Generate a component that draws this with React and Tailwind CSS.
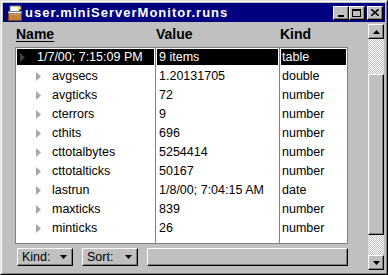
import React from "react";

const rows = [
  { name: "avgsecs", value: "1.20131705", kind: "double" },
  { name: "avgticks", value: "72", kind: "number" },
  { name: "cterrors", value: "9", kind: "number" },
  { name: "cthits", value: "696", kind: "number" },
  { name: "cttotalbytes", value: "5254414", kind: "number" },
  { name: "cttotalticks", value: "50167", kind: "number" },
  { name: "lastrun", value: "1/8/00; 7:04:15 AM", kind: "date" },
  { name: "maxticks", value: "839", kind: "number" },
  { name: "minticks", value: "26", kind: "number" },
];

const raised =
  "border border-t-white border-l-white border-r-black border-b-black shadow-[inset_-1px_-1px_#808080]";

const checker =
  "bg-[repeating-conic-gradient(#ffffff_0_25%,#c0c0c0_0_50%)] bg-[length:2px_2px]";

const Tri = ({ color }) => (
  <svg width="5" height="9" viewBox="0 0 5 9" className="shrink-0">
    <polygon points="0,0 5,4.5 0,9" fill={color} />
  </svg>
);

const DownArrow = () => (
  <svg width="7" height="4" viewBox="0 0 7 4">
    <polygon points="0,0 7,0 3.5,4" fill="black" />
  </svg>
);

const UpArrow = () => (
  <svg width="7" height="4" viewBox="0 0 7 4">
    <polygon points="0,4 7,4 3.5,0" fill="black" />
  </svg>
);

const TitleIcon = () => (
  <svg width="15" height="16" viewBox="0 0 15 16">
    <rect x="2" y="1" width="9" height="7" fill="#ffffff" stroke="#808080" />
    <path d="M11 0 L12 2 L14 1 L12.5 3 L14 5 L12 4 L11 6 L10.5 4 L9 4 L10.5 3 Z" fill="#ffff00" />
    <rect x="0.5" y="6.5" width="13" height="9" fill="#c08040" stroke="#804000" />
    <rect x="2" y="8" width="10" height="2" fill="#e0a060" />
    <rect x="0.5" y="6.5" width="13" height="2" fill="#ffffff" stroke="#808080" />
  </svg>
);

const TitleButton = ({ children }) => (
  <div className={`w-[16px] h-[14px] bg-[#c0c0c0] flex items-center justify-center ${raised}`}>
    {children}
  </div>
);

const App = () => {
  return (
    <div className="w-[388px] h-[275px] bg-[#c0c0c0] border border-t-[#dfdfdf] border-l-[#dfdfdf] border-r-black border-b-black font-['Liberation_Sans',Arial,sans-serif] text-black">
      <div className="h-full border border-t-white border-l-white border-r-[#808080] border-b-[#808080] p-px flex flex-col">
        {/* title bar */}
        <div className="h-[19px] bg-[#000080] flex items-center pl-[5px] pr-[2px]">
          <TitleIcon />
          <span className="ml-[2px] text-white font-bold text-[13px] tracking-[1px] leading-[14px]">
            user.miniServerMonitor.runs
          </span>
          <div className="ml-auto flex">
            <TitleButton>
              <div className="w-[6px] h-[2px] bg-black mt-[6px] -ml-[1px]" />
            </TitleButton>
            <TitleButton>
              <div className="w-[9px] h-[8px] border border-black border-t-2 -ml-[1px]" />
            </TitleButton>
            <div className="w-[2px]" />
            <TitleButton>
              <svg width="8" height="7" viewBox="0 0 8 7" className="-ml-[1px]">
                <path d="M0 0 L8 7 M8 0 L0 7" stroke="black" strokeWidth="1.6" />
              </svg>
            </TitleButton>
          </div>
        </div>

        {/* body */}
        <div className="flex-1 flex min-h-0">
          <div className="flex-1 pl-[12px] pt-[4px]">
            {/* header */}
            <div className="h-[21px] flex text-[14px] leading-[16px] font-bold">
              <div className="w-[140px] pl-px">
                <span className="underline underline-offset-[2px]">Name</span>
              </div>
              <div className="w-[124px] pl-px">Value</div>
              <div className="w-[68px] pl-px">Kind</div>
            </div>

            {/* table */}
            <div className="w-[333px] h-[197px] border border-[#808080] bg-white flex text-[12.5px] leading-[16px]">
              <div className="w-[139px]">
                <div className="h-[19px] pt-px px-px">
                  <div className="h-[16px] bg-black text-white flex items-center pl-[3px]">
                    <Tri color="#404040" />
                    <span className="ml-[12px]">1/7/00; 7:15:09 PM</span>
                  </div>
                </div>
                {rows.map((r) => (
                  <div key={r.name} className="h-[19px] pt-px pl-[20px]">
                    <div className="h-[16px] flex items-center">
                      <Tri color="#a8a8a8" />
                      <span className="ml-[11px]">{r.name}</span>
                    </div>
                  </div>
                ))}
              </div>
              <div className="w-[124px] border-l border-[#808080]">
                <div className="h-[19px] pt-px px-px">
                  <div className="h-[16px] bg-black text-white pl-[2px]">9 items</div>
                </div>
                {rows.map((r) => (
                  <div key={r.name} className="h-[19px] pt-px pl-[3px]">
                    {r.value}
                  </div>
                ))}
              </div>
              <div className="w-[68px] border-l border-[#808080]">
                <div className="h-[19px] pt-px px-px">
                  <div className="h-[16px] bg-black text-white pl-px">table</div>
                </div>
                {rows.map((r) => (
                  <div key={r.name} className="h-[19px] pt-px pl-[2px]">
                    {r.kind}
                  </div>
                ))}
              </div>
            </div>

            {/* bottom controls */}
            <div className="mt-[4px] ml-[2px] flex gap-[9px] text-[12.5px]">
              <div className={`w-[56px] h-[18px] flex items-center justify-between pl-[4px] pr-[5px] ${raised}`}>
                <span>Kind:</span>
                <DownArrow />
              </div>
              <div className={`w-[56px] h-[18px] flex items-center justify-between pl-[4px] pr-[5px] ${raised}`}>
                <span>Sort:</span>
                <DownArrow />
              </div>
              <div className={`w-[201px] h-[18px] ${raised}`} />
            </div>
          </div>

          {/* scrollbar */}
          <div className="w-[16px] mr-px pt-[2px] pb-[2px] flex flex-col">
            <div className={`h-[15px] flex items-center justify-center ${raised}`}>
              <UpArrow />
            </div>
            <div className={`h-[35px] ${checker}`} />
            <div className={`h-[161px] ${raised}`} />
            <div className={`flex-1 ${checker}`} />
            <div className={`h-[15px] flex items-center justify-center ${raised}`}>
              <DownArrow />
            </div>
          </div>
        </div>
      </div>
    </div>
  );
};

export default App;
